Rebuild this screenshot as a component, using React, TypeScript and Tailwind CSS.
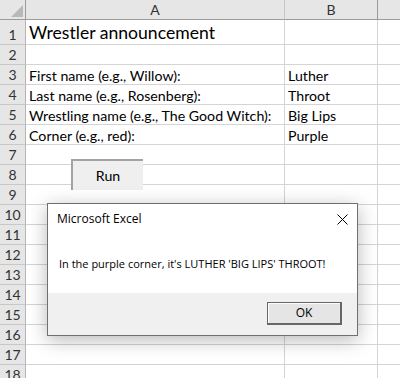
import React from 'react';

const rows: { n: number; a?: string; b?: string; tall?: boolean }[] = [
  { n: 1, a: 'Wrestler announcement', tall: true },
  { n: 2 },
  { n: 3, a: 'First name (e.g., Willow):', b: 'Luther' },
  { n: 4, a: 'Last name (e.g., Rosenberg):', b: 'Throot' },
  { n: 5, a: 'Wrestling name (e.g., The Good Witch):', b: 'Big Lips' },
  { n: 6, a: 'Corner (e.g., red):', b: 'Purple' },
  { n: 7 },
  { n: 8 },
  { n: 9 },
  { n: 10 },
  { n: 11 },
  { n: 12 },
  { n: 13 },
  { n: 14 },
  { n: 15 },
  { n: 16 },
  { n: 17 },
  { n: 18 },
];

const cellFont = "font-['Lato','Liberation_Sans',sans-serif]";

const App: React.FC = () => {
  return (
    <div className="relative w-[400px] h-[378px] overflow-hidden bg-white text-black">
      <div className={`grid grid-cols-[26px_259px_93px_1fr] ${cellFont}`}>
        {/* column headers */}
        <div className="h-[20px] bg-[#e6e6e6] border-r border-b border-[#9b9b9b] relative">
          <div className="absolute right-[2px] bottom-[2px] w-0 h-0 border-l-[12px] border-l-transparent border-b-[12px] border-b-[#b8b8b8]" />
        </div>
        <div className="h-[20px] bg-[#e6e6e6] border-r border-r-[#c6c6c6] border-b border-b-[#9b9b9b] flex items-center justify-center text-[14px] text-[#333]">A</div>
        <div className="h-[20px] bg-[#e6e6e6] border-r border-r-[#9b9b9b] border-b border-b-[#9b9b9b] flex items-center justify-center text-[14px] text-[#333]">B</div>
        <div className="h-[20px] bg-[#e6e6e6] border-b border-[#9b9b9b]" />

        {rows.map(r => (
          <React.Fragment key={r.n}>
            <div className={`${r.tall ? 'h-[25px]' : 'h-[20px]'} bg-[#e6e6e6] border-r border-r-[#b5b5b5] border-b border-b-[#c8c8c8] flex items-end justify-center pb-[1px] text-[14px] text-[#333] leading-none`}>
              <span className="mb-[1px]">{r.n}</span>
            </div>
            <div className={`${r.tall ? 'h-[25px]' : 'h-[20px]'} border-r border-b border-[#d4d4d4] flex items-end pl-[3px] whitespace-nowrap overflow-visible ${r.tall ? 'text-[17.6px] pb-[2px]' : 'text-[14.2px] pb-[1px]'} leading-none`}>
              {r.a}
            </div>
            <div className={`${r.tall ? 'h-[25px]' : 'h-[20px]'} border-r border-b border-[#d4d4d4] flex items-end pl-[3px] pb-[1px] text-[14.2px] leading-none whitespace-nowrap`}>
              {r.b}
            </div>
            <div className={`${r.tall ? 'h-[25px]' : 'h-[20px]'} border-b border-[#d4d4d4]`} />
          </React.Fragment>
        ))}
      </div>

      {/* Run button drawn on the sheet */}
      <div className={`absolute left-[71px] top-[159px] w-[72px] h-[31px] bg-[#efefef] border-t-2 border-l-2 border-[#a3a3a3] flex items-center justify-center text-[14.2px] ${cellFont}`}>
        Run
      </div>

      {/* message box */}
      <div className="absolute left-[47px] top-[203px] w-[311px] h-[133px] bg-white border border-[#707070] shadow-[0_4px_18px_rgba(0,0,0,0.28)] flex flex-col font-['Open_Sans','Noto_Sans',sans-serif] text-[12px]">
        <div className="h-[30px] flex items-center justify-between pl-[9px] pr-[9px]">
          <span>Microsoft Excel</span>
          <svg width="11" height="11" viewBox="0 0 11 11" className="mt-[1px]">
            <path d="M0.5 0.5 L10.5 10.5 M10.5 0.5 L0.5 10.5" stroke="#000" strokeWidth="1" />
          </svg>
        </div>
        <div className="flex-1 pl-[11px] pt-[22px] text-[11px]">
          In the purple corner, it's LUTHER 'BIG LIPS' THROOT!
        </div>
        <div className="h-[42px] bg-[#f0f0f0] flex items-start justify-end pt-[9px] pr-[15px]">
          <div className="w-[75px] h-[23px] bg-[#e5e5e5] border-t border-l border-r-2 border-b-2 border-[#676767] shadow-[inset_1px_1px_0_#fdfdfd] flex items-center justify-center">
            OK
          </div>
        </div>
      </div>
    </div>
  );
};

export default App;
